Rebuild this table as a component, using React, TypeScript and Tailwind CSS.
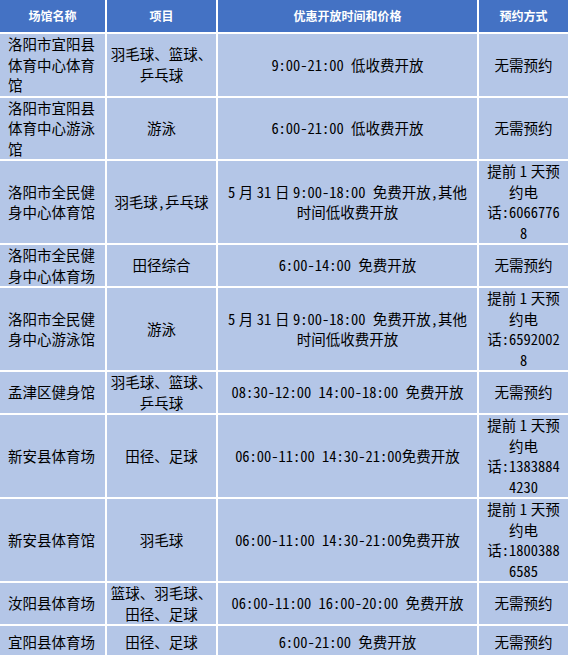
type Row = {
  name: string[];
  item: string[];
  time: string[];
  book: string[];
  last?: boolean;
};

// narrow space, the gap the source leaves between Chinese and digits
const S = '\u2005';

const NO_BOOKING = ['无需预约'];
const ADVANCE = `提前${S}1${S}天预`;

const rows: Row[] = [
  {
    name: ['洛阳市宜阳县', '体育中心体育', '馆'],
    item: ['羽毛球、篮球、', '乒乓球'],
    time: ['9:00-21:00 低收费开放'],
    book: NO_BOOKING,
  },
  {
    name: ['洛阳市宜阳县', '体育中心游泳', '馆'],
    item: ['游泳'],
    time: ['6:00-21:00 低收费开放'],
    book: NO_BOOKING,
  },
  {
    name: ['洛阳市全民健', '身中心体育馆'],
    item: ['羽毛球,乒乓球'],
    time: [`5${S}月${S}31${S}日${S}9:00-18:00 免费开放,其他`, '时间低收费开放'],
    book: [ADVANCE, '约电', '话:6066776', '8'],
  },
  {
    name: ['洛阳市全民健', '身中心体育场'],
    item: ['田径综合'],
    time: ['6:00-14:00 免费开放'],
    book: NO_BOOKING,
  },
  {
    name: ['洛阳市全民健', '身中心游泳馆'],
    item: ['游泳'],
    time: [`5${S}月${S}31${S}日${S}9:00-18:00 免费开放,其他`, '时间低收费开放'],
    book: [ADVANCE, '约电', '话:6592002', '8'],
  },
  {
    name: ['孟津区健身馆'],
    item: ['羽毛球、篮球、', '乒乓球'],
    time: ['08:30-12:00 14:00-18:00 免费开放'],
    book: NO_BOOKING,
  },
  {
    name: ['新安县体育场'],
    item: ['田径、足球'],
    time: ['06:00-11:00 14:30-21:00免费开放'],
    book: [ADVANCE, '约电', '话:1383884', '4230'],
  },
  {
    name: ['新安县体育馆'],
    item: ['羽毛球'],
    time: ['06:00-11:00 14:30-21:00免费开放'],
    book: [ADVANCE, '约电', '话:1800388', '6585'],
  },
  {
    name: ['汝阳县体育场'],
    item: ['篮球、羽毛球、', '田径、足球'],
    time: ['06:00-11:00 16:00-20:00 免费开放'],
    book: NO_BOOKING,
  },
  {
    name: ['宜阳县体育场'],
    item: ['田径、足球'],
    time: ['6:00-21:00 免费开放'],
    book: NO_BOOKING,
    last: true,
  },
];

const headers = ['场馆名称', '项目', '优惠开放时间和价格', '预约方式'];

function Lines({ lines }: { lines: string[] }) {
  return (
    <div>
      {lines.map((l, i) => (
        <div key={i} className="whitespace-pre">
          {l}
        </div>
      ))}
    </div>
  );
}

export default function App() {
  return (
    <div className="min-h-screen bg-white">
      <div className="grid w-[568px] grid-cols-[105px_109px_259px_89px] gap-[2px] bg-white text-[14.5px] leading-[20.5px] text-black [font-family:'Noto_Sans_CJK_SC',sans-serif] [font-feature-settings:'hwid']">
        {/* Header */}
        {headers.map((h) => (
          <div
            key={h}
            className="flex h-[32px] items-center justify-center bg-[#4472C4] text-[12px] font-bold text-white"
          >
            {h}
          </div>
        ))}

        {rows.map((r, i) => {
          const cell = `flex items-center bg-[#B4C6E7] ${r.last ? 'min-h-[33px]' : ''}`;
          return [
            <div key={`n${i}`} className={`${cell} pl-[8px]`}>
              <Lines lines={r.name} />
            </div>,
            <div key={`i${i}`} className={`${cell} justify-center text-center`}>
              <Lines lines={r.item} />
            </div>,
            <div key={`t${i}`} className={`${cell} justify-center text-center`}>
              <Lines lines={r.time} />
            </div>,
            <div key={`b${i}`} className={`${cell} justify-center text-center`}>
              <Lines lines={r.book} />
            </div>,
          ];
        })}
      </div>
    </div>
  );
}
